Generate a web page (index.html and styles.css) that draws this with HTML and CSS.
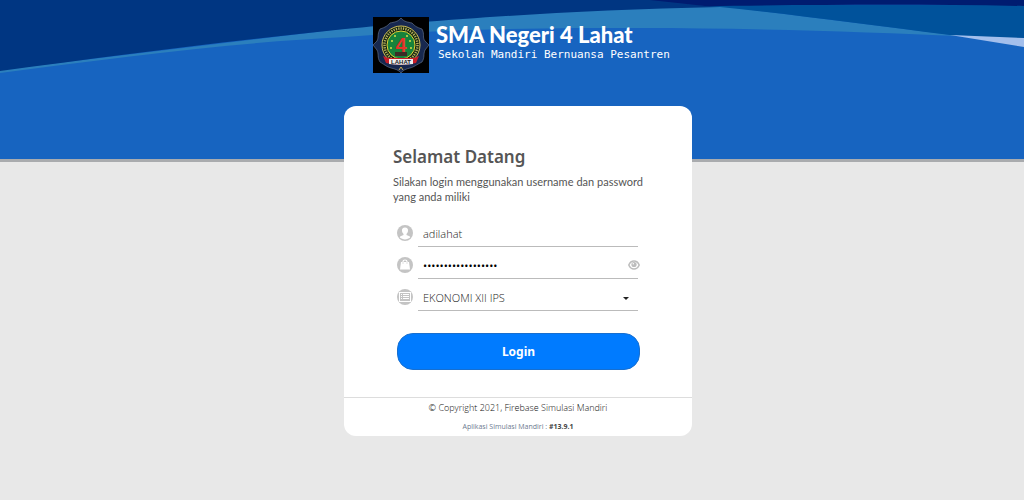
FILE: index.html
```html
<!DOCTYPE html>
<html lang="id">
<head>
    <meta charset="UTF-8">
    <meta name="viewport" content="width=device-width, initial-scale=1.0">
    <title>SMA Negeri 4 Lahat - Login</title>
    <link rel="stylesheet" href="styles.css">
</head>
<body>
    <header class="header">
        <svg class="waves" viewBox="0 0 1024 159" preserveAspectRatio="none" aria-hidden="true">
            <path fill="#2b7fbd" d="M0 73C120 57 240 42 345 37C450 28 560 28 640 28C750 28 870 32 960 36L720 6L500 10L0 70Z"/>
            <path fill="#003682" d="M0 0H720V7C560 10 430 21 345 29C220 42 110 56 0 71Z"/>
            <path fill="#00529b" d="M655 1L700 5H1024V39L950 35C870 25 790 14 720 7Z"/>
            <path fill="#001c70" d="M650 0H1024V6C920 4 800 5 705 6Z"/>
            <path fill="#a3bfec" d="M950 35L1024 38V47Z"/>
        </svg>
        <div class="brand">
            <svg class="logo" viewBox="0 0 56 56" role="img" aria-label="Logo SMA Negeri 4 Lahat">
                <rect width="56" height="56" fill="#000"/>
                <path fill="#17284f" stroke="#6c7c95" stroke-width=".6" d="M28 1C31 5 35 5 39 6C42 9 43 10 49 12C52 18 49 20 52 24L56 28L52 33C50 38 52 40 49 45C43 48 41 50 37 51C33 52 30 53 28 56C26 53 22 52 18 51C14 50 12 48 7 45C4 40 6 37 4 33L0 28L4 24C6 20 4 18 7 12C13 10 14 9 17 6C21 5 25 5 28 1Z"/>
                <circle cx="28" cy="28" r="19" fill="#12230f" stroke="#d8c65a"/>
                <circle cx="28" cy="28" r="16.500" fill="none" stroke="#b5ad5c" stroke-width="2.500" stroke-dasharray="1.300 1.100"/>
                <circle cx="28" cy="28" r="14" fill="#16823b" stroke="#e3cf35"/>
                <g fill="#d7df4a">
                    <circle cx="19" cy="24" r="1"/><circle cx="37" cy="24" r="1"/>
                    <circle cx="18" cy="31" r="1"/><circle cx="38" cy="31" r="1"/>
                    <circle cx="22" cy="19" r="1"/><circle cx="34" cy="19" r="1"/>
                </g>
                <path fill="#3b2c25" d="M22 35H34V39H22Z"/>
                <text class="logo-number" x="28" y="35">4</text>
                <path fill="#c71d27" d="M10 39L15 41H41L46 39L43 46C33 48 23 48 13 46Z"/>
                <path fill="#eee" d="M16 42H40V47C32 48 24 48 16 47Z"/>
                <text class="logo-name" x="28" y="47">LAHAT</text>
                <path fill="none" stroke="#c8ae55" d="M26 53L28 50L30 53"/>
            </svg>
            <div class="brand-text">
                <h1 class="brand-name">SMA Negeri 4 Lahat</h1>
                <p class="brand-tagline">Sekolah Mandiri Bernuansa Pesantren</p>
            </div>
        </div>
    </header>

    <main class="content">
        <div class="card">
            <form class="login-form">
                <h2 class="welcome">Selamat Datang</h2>
                <p class="intro">Silakan login menggunakan username dan password yang anda miliki</p>

                <div class="fields">
                    <div class="form-group">
                        <label for="username" aria-label="Username">
                            <svg class="icon" viewBox="0 0 16 16">
                                <circle cx="8" cy="8" r="8" fill="#c4c4c4"/>
                                <path fill="#fff" d="M8 2.500C5.800 2.500 4.700 4 5 6C5.200 7.300 5.800 8.300 6.500 8.900V10L3.500 11.300C3.100 11.500 2.900 12 2.800 12.600C5.500 15 10.500 15 13.200 12.600C13.100 12 12.900 11.500 12.500 11.300L9.500 10V8.900C10.200 8.300 10.800 7.300 11 6C11.300 4 10.200 2.500 8 2.500Z"/>
                            </svg>
                        </label>
                        <div class="control">
                            <input type="text" id="username" name="username" value="adilahat">
                        </div>
                    </div>
                    <div class="form-group">
                        <label for="password" aria-label="Password">
                            <svg class="icon" viewBox="0 0 16 16">
                                <circle cx="8" cy="8" r="8" fill="#c4c4c4"/>
                                <path fill="none" stroke="#fff" stroke-width="1.200" d="M6 6V4.500C6 2.500 10 2.500 10 4.500V6"/>
                                <path fill="#fff" d="M4 5H12L13 12.500H3Z"/>
                                <path fill="#c4c4c4" d="M5.500 5.500H6.500V6.500H5.500ZM9.500 5.500H10.500V6.500H9.500Z"/>
                            </svg>
                        </label>
                        <div class="control">
                            <input class="password" type="password" id="password" name="password" value="simulasimandiri123">
                            <button class="show-password" type="button" aria-label="Tampilkan password">
                                <svg viewBox="0 0 12 10">
                                    <path fill="#fff" stroke="#bdbdbd" stroke-width="1.500" d="M.8 5C2 2 4 1 6 1S10 2 11.200 5C10 8 8 9 6 9S2 8 .8 5Z"/>
                                    <circle cx="6" cy="4.500" r="2.600" fill="#bdbdbd"/>
                                    <circle cx="5.300" cy="3.800" r=".8" fill="#fff"/>
                                </svg>
                            </button>
                        </div>
                    </div>
                    <div class="form-group">
                        <label for="subject" aria-label="Mata pelajaran">
                            <svg class="icon" viewBox="0 0 16 16">
                                <circle cx="8" cy="8" r="8" fill="#c4c4c4"/>
                                <rect x="2.500" y="3.500" width="11" height="9" fill="none" stroke="#fff"/>
                                <path fill="none" stroke="#fff" d="M4 5.500H5M6 5.500H12M4 7.500H5M6 7.500H12M4 9.500H5M6 9.500H12"/>
                            </svg>
                        </label>
                        <div class="control caret">
                            <select id="subject" name="subject">
                                <option>EKONOMI XII IPS</option>
                            </select>
                        </div>
                    </div>
                </div>

                <button class="btn-login" type="submit">Login</button>
            </form>

            <footer class="card-footer">
                <p class="copyright">© Copyright 2021, Firebase Simulasi Mandiri</p>
                <p class="version">Aplikasi Simulasi Mandiri : <strong>#13.9.1</strong></p>
            </footer>
        </div>
    </main>
</body>
</html>
```
FILE: styles.css
```css
* {
    box-sizing: border-box;
}

body {
    margin: 0;
    min-height: 100vh;
    background-color: #e8e8e8;
    color: #444;
    font-family: "Open Sans", "Noto Sans", sans-serif;
}

h1, h2, p {
    margin: 0;
}

/* Header */
.header {
    position: relative;
    height: 162px;
    padding: 17px 0 0 12px;
    background-color: #1764c0;
    border-bottom: 3px solid #a9abae;
}

.waves {
    position: absolute;
    inset: 0;
    width: 100%;
    height: 100%;
}

.brand {
    position: relative;
    display: flex;
    gap: 7px;
    width: 348px;
    max-width: 100%;
    margin: 0 auto;
    padding-left: 29px;
    color: #fff;
}

.logo {
    flex: none;
    width: 56px;
    height: 56px;
}

.logo-number {
    font: bold 20px "Liberation Sans", sans-serif;
    fill: #e5332a;
    text-anchor: middle;
}

.logo-name {
    font: bold 6px "Liberation Sans", sans-serif;
    fill: #222;
    text-anchor: middle;
}

.brand-text {
    padding-top: 4px;
    white-space: nowrap;
}

.brand-name {
    font: 900 22px/28px Lato, sans-serif;
}

.brand-tagline {
    padding-left: 2px;
    font: 11px/12px "DejaVu Sans Mono", monospace;
}

/* Login card, pulled up over the header */
.content {
    position: relative;
    margin-top: -56px;
    padding-left: 12px;
}

.card {
    width: 348px;
    max-width: 100%;
    margin: 0 auto;
    background-color: #fff;
    border-radius: 12px;
}

.login-form {
    padding: 38px 49px 27px;
}

.welcome {
    color: #555;
    font: 600 17px/26px "Noto Sans", sans-serif;
}

.intro {
    margin-top: 4px;
    color: #555;
    font: 11px/15px Lato, sans-serif;
    text-align: justify;
}

.fields {
    display: grid;
    gap: 1px;
    padding: 12px 5px 0 4px;
}

.form-group {
    display: flex;
    align-items: center;
    gap: 5px;
}

.form-group label {
    display: flex;
    padding-top: 3px;
}

.icon {
    width: 16px;
    height: 16px;
}

.control {
    position: relative;
    flex: 1;
    border-bottom: 1px solid #bbb;
}

.control input,
.control select {
    display: block;
    width: 100%;
    height: 30px;
    padding: 4px 5px 0;
    border: 0;
    background: transparent;
    color: #222;
    font: 300 11px "Open Sans", sans-serif;
    outline: none;
    appearance: none;
}

.control .password {
    padding-right: 24px;
    color: #000;
    font-weight: 400;
}

.show-password {
    position: absolute;
    right: -2px;
    top: 12px;
    width: 12px;
    height: 10px;
    padding: 0;
    border: 0;
    background: none;
    cursor: pointer;
}

.show-password svg {
    display: block;
}

.caret::after {
    content: "";
    position: absolute;
    right: 9px;
    top: 17px;
    border: 3px solid transparent;
    border-top-color: #222;
    border-bottom: 0;
    pointer-events: none;
}

.btn-login {
    display: block;
    width: calc(100% - 7px);
    height: 37px;
    margin: 22px 0 0 4px;
    border: 1px solid #176fd0;
    border-radius: 16px;
    background-color: #007bff;
    color: #fff;
    font: bold 12px "Noto Sans", sans-serif;
    cursor: pointer;
}

.card-footer {
    padding: 3px 0;
    border-top: 1px solid #ddd;
    text-align: center;
}

.copyright {
    color: #111;
    font-size: 9px;
    font-weight: 300;
    line-height: 14px;
}

.version {
    margin-top: 6px;
    color: #6c7a90;
    font-size: 7px;
    line-height: 12px;
}

.version strong {
    color: #444;
}
```
